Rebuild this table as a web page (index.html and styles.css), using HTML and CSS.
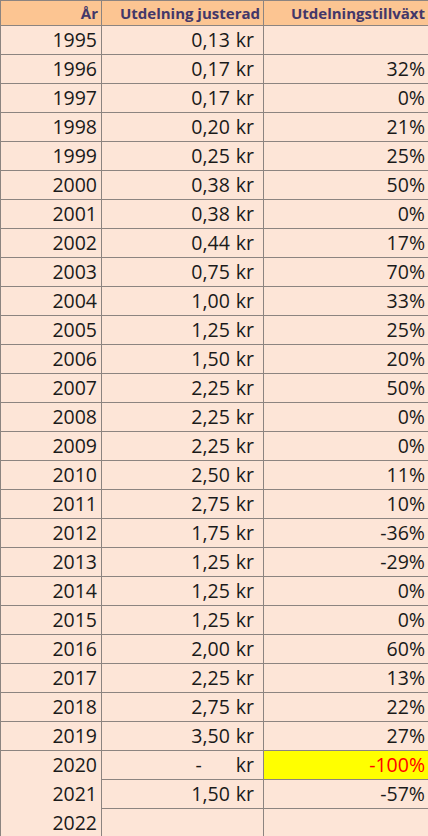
FILE: index.html
```html
<!DOCTYPE html>
<html lang="sv">
<head>
  <meta charset="UTF-8" />
  <title>Utdelning</title>
  <meta name="viewport" content="width=device-width, initial-scale=1.0" />
  <link rel="stylesheet" href="styles.css">
</head>
<body>
  <table class="sheet">
    <colgroup>
      <col class="c-year">
      <col class="c-div">
      <col class="c-growth">
    </colgroup>
    <thead>
      <tr>
        <th>År</th>
        <th>Utdelning justerad</th>
        <th>Utdelningstillväxt</th>
      </tr>
    </thead>
    <tbody>
      <tr><td>1995</td><td class="money"><span>0,13</span><span class="kr">kr</span></td><td></td></tr>
      <tr><td>1996</td><td class="money"><span>0,17</span><span class="kr">kr</span></td><td>32%</td></tr>
      <tr><td>1997</td><td class="money"><span>0,17</span><span class="kr">kr</span></td><td>0%</td></tr>
      <tr><td>1998</td><td class="money"><span>0,20</span><span class="kr">kr</span></td><td>21%</td></tr>
      <tr><td>1999</td><td class="money"><span>0,25</span><span class="kr">kr</span></td><td>25%</td></tr>
      <tr><td>2000</td><td class="money"><span>0,38</span><span class="kr">kr</span></td><td>50%</td></tr>
      <tr><td>2001</td><td class="money"><span>0,38</span><span class="kr">kr</span></td><td>0%</td></tr>
      <tr><td>2002</td><td class="money"><span>0,44</span><span class="kr">kr</span></td><td>17%</td></tr>
      <tr><td>2003</td><td class="money"><span>0,75</span><span class="kr">kr</span></td><td>70%</td></tr>
      <tr><td>2004</td><td class="money"><span>1,00</span><span class="kr">kr</span></td><td>33%</td></tr>
      <tr><td>2005</td><td class="money"><span>1,25</span><span class="kr">kr</span></td><td>25%</td></tr>
      <tr><td>2006</td><td class="money"><span>1,50</span><span class="kr">kr</span></td><td>20%</td></tr>
      <tr><td>2007</td><td class="money"><span>2,25</span><span class="kr">kr</span></td><td>50%</td></tr>
      <tr><td>2008</td><td class="money"><span>2,25</span><span class="kr">kr</span></td><td>0%</td></tr>
      <tr><td>2009</td><td class="money"><span>2,25</span><span class="kr">kr</span></td><td>0%</td></tr>
      <tr><td>2010</td><td class="money"><span>2,50</span><span class="kr">kr</span></td><td>11%</td></tr>
      <tr><td>2011</td><td class="money"><span>2,75</span><span class="kr">kr</span></td><td>10%</td></tr>
      <tr><td>2012</td><td class="money"><span>1,75</span><span class="kr">kr</span></td><td>-36%</td></tr>
      <tr><td>2013</td><td class="money"><span>1,25</span><span class="kr">kr</span></td><td>-29%</td></tr>
      <tr><td>2014</td><td class="money"><span>1,25</span><span class="kr">kr</span></td><td>0%</td></tr>
      <tr><td>2015</td><td class="money"><span>1,25</span><span class="kr">kr</span></td><td>0%</td></tr>
      <tr><td>2016</td><td class="money"><span>2,00</span><span class="kr">kr</span></td><td>60%</td></tr>
      <tr><td>2017</td><td class="money"><span>2,25</span><span class="kr">kr</span></td><td>13%</td></tr>
      <tr><td>2018</td><td class="money"><span>2,75</span><span class="kr">kr</span></td><td>22%</td></tr>
      <tr><td>2019</td><td class="money"><span>3,50</span><span class="kr">kr</span></td><td>27%</td></tr>
      <tr class="open"><td>2020</td><td class="money"><span class="dash">-</span><span class="kr">kr</span></td><td class="alert">-100%</td></tr>
      <tr class="open"><td>2021</td><td class="money"><span>1,50</span><span class="kr">kr</span></td><td>-57%</td></tr>
      <tr class="open"><td>2022</td><td class="money"></td><td></td></tr>
    </tbody>
  </table>
</body>
</html>
```

FILE: styles.css
```css
* {
  box-sizing: border-box;
}

html, body {
  margin: 0;
  padding: 0;
  background: #fde5d7;
  overflow: hidden;
}

.sheet {
  width: 428px;
  border-collapse: collapse;
  table-layout: fixed;
  font-family: 'Open Sans', sans-serif;
  color: #1a1a1a;
  background: #fde5d7;
}

.c-year { width: 101px; }
.c-div { width: 162px; }
.c-growth { width: 165px; }

.sheet th,
.sheet td {
  border: 1px solid #8c8480;
  text-align: right;
  white-space: nowrap;
  padding: 0 3px 0 0;
}

.sheet th {
  height: 25px;
  background: #fcc592;
  color: #433769;
  font-size: 15px;
  font-weight: 700;
}

.sheet td {
  height: 29px;
  font-size: 19.5px;
  line-height: 28px;
}

.sheet td:first-child {
  padding-right: 4px;
}

.sheet td.money {
  padding-right: 9px;
}

.money .kr {
  margin-left: 6px;
}

.money .dash {
  margin-right: 28px;
}

.sheet tr.open td:first-child {
  border-bottom: none;
}

.sheet tr.open + tr.open td:first-child {
  border-top: none;
}

.sheet td.alert {
  background: #ffff00;
  color: #ff0000;
}
```
